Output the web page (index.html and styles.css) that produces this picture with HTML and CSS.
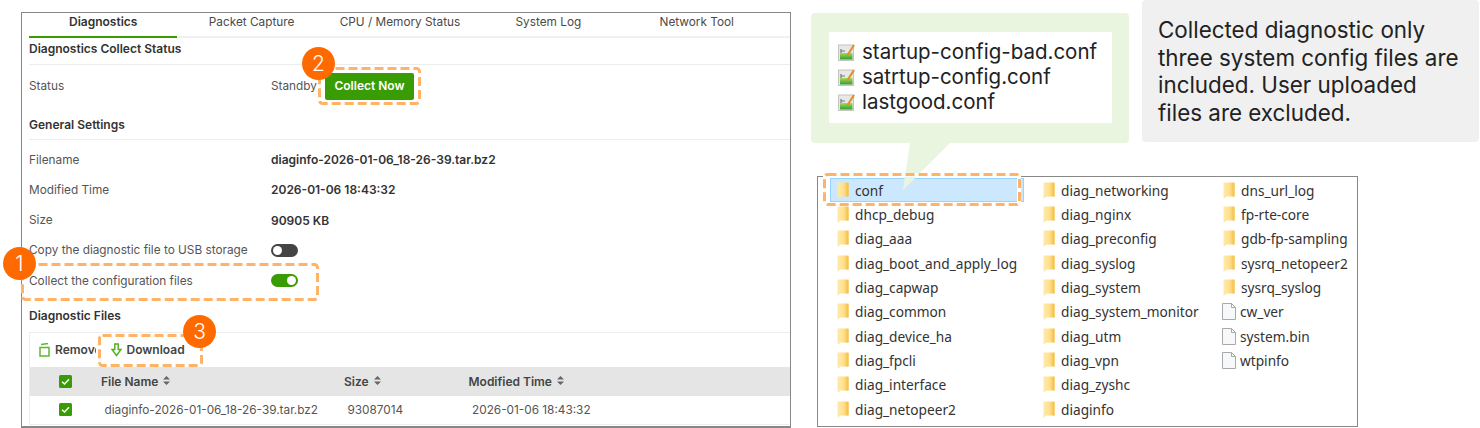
FILE: index.html
```html
<!DOCTYPE html>
<html lang="en">
<head>
<meta charset="utf-8">
<title>Diagnostics</title>
<link rel="stylesheet" href="styles.css">
</head>
<body>
<svg class="defs" aria-hidden="true">
  <defs>
    <linearGradient id="fg" x1="0" x2="1" y1="0" y2="0"><stop offset="0" stop-color="#ffe9ae"/><stop offset=".55" stop-color="#ffe08c"/><stop offset="1" stop-color="#f3c04e"/></linearGradient>
    <linearGradient id="cg" x1="0" x2="0" y1="0" y2="1"><stop offset="0" stop-color="#a5dc5a"/><stop offset="1" stop-color="#2f9e33"/></linearGradient>
    <symbol id="folder" viewBox="0 0 12 17"><path d="M0.5 0.5H11.5V14.5H3.5L1.2 16.5H0.5Z" fill="url(#fg)"/><path d="M9.5 1H11.5V14.5H9.5Z" fill="#f5c655"/></symbol>
    <symbol id="file" viewBox="0 0 14 17"><path d="M0.5 0.5H9.5L13.5 4.5V16.5H0.5Z" fill="#f7f8f9" stroke="#a9a9a9"/><path d="M9.5 0.5V4.5H13.5" fill="none" stroke="#a9a9a9"/></symbol>
    <symbol id="conf" viewBox="0 0 17 17"><rect x="0.5" y="1" width="15" height="15.5" fill="#e8e8e8" stroke="#c4c4c4"/><rect x="2" y="9" width="12.500" height="6.500" fill="url(#cg)"/><path d="M3 5v4M3 7h4" stroke="#777" stroke-width="1.200" fill="none"/><path d="M16 1L9 12" stroke="#e0912a" stroke-width="2.200"/></symbol>
    <symbol id="check" viewBox="0 0 13 13"><rect width="13" height="13" rx="1.500" fill="#3a9c05"/><path d="M3 6.800L5.500 9L10 4.300" fill="none" stroke="#fff" stroke-width="1.500"/></symbol>
    <symbol id="sort" viewBox="0 0 7 9"><path d="M3.500 0L7 3.500H0Z M0 5.500H7L3.500 9Z" fill="#666"/></symbol>
  </defs>
</svg>
<div class="page">
  <section class="panel">
    <nav class="tabs">
      <span class="tab tab-active">Diagnostics</span>
      <span class="tab">Packet Capture</span>
      <span class="tab">CPU / Memory Status</span>
      <span class="tab">System Log</span>
      <span class="tab">Network Tool</span>
    </nav>
    <div class="body">
      <h2 class="head head-first">Diagnostics Collect Status</h2>
      <div class="row row-status"><span class="label">Status</span><span class="value-plain">Standby</span><button class="collect">Collect Now</button></div>
      <h2 class="head head-general">General Settings</h2>
      <div class="rows">
        <div class="row"><span class="label">Filename</span><span class="value">diaginfo-2026-01-06_18-26-39.tar.bz2</span></div>
        <div class="row"><span class="label">Modified Time</span><span class="value">2026-01-06 18:43:32</span></div>
        <div class="row"><span class="label">Size</span><span class="value">90905 KB</span></div>
        <div class="row"><span class="label">Copy the diagnostic file to USB storage</span><span class="toggle"></span></div>
        <div class="row"><span class="label">Collect the configuration files</span><span class="toggle toggle-on"></span></div>
      </div>
      <h2 class="head head-files">Diagnostic Files</h2>
      <div class="files">
        <div class="toolbar">
          <span class="tool tool-remove"><svg class="tool-icon" viewBox="0 0 11 14"><path d="M1 4.500H10V13H1Z M2 1.500L9 0.500" fill="none" stroke="#5cb82e" stroke-width="1.500"/></svg>Remove</span>
          <span class="tool tool-download"><svg class="tool-icon" viewBox="0 0 11 14"><path d="M3.800 1H7.200V6.500H10L5.500 12.500L1 6.500H3.800Z" fill="none" stroke="#4fae1e" stroke-width="1.400"/></svg>Download</span>
        </div>
        <div class="grid grid-head">
          <span class="cell-check"><svg class="check"><use href="#check"/></svg></span>
          <span>File Name<svg class="sort"><use href="#sort"/></svg></span>
          <span>Size<svg class="sort"><use href="#sort"/></svg></span>
          <span>Modified Time<svg class="sort"><use href="#sort"/></svg></span>
        </div>
        <div class="grid grid-row">
          <span class="cell-check"><svg class="check"><use href="#check"/></svg></span>
          <span class="cell">diaginfo-2026-01-06_18-26-39.tar.bz2</span>
          <span class="cell">93087014</span>
          <span class="cell">2026-01-06 18:43:32</span>
        </div>
      </div>
    </div>
  </section>

  <div class="side">
    <div class="notes">
      <div class="bubble">
        <div class="conf-list">
          <div class="conf-item"><svg class="conf-icon"><use href="#conf"/></svg>startup-config-bad.conf</div>
          <div class="conf-item"><svg class="conf-icon"><use href="#conf"/></svg>satrtup-config.conf</div>
          <div class="conf-item"><svg class="conf-icon"><use href="#conf"/></svg>lastgood.conf</div>
        </div>
      </div>
      <p class="note">Collected diagnostic only three system config files are included. User uploaded files are excluded.</p>
    </div>
    <div class="explorer">
      <div class="entry entry-selected"><svg class="ficon"><use href="#folder"/></svg>conf</div>
      <div class="entry"><svg class="ficon"><use href="#folder"/></svg>dhcp_debug</div>
      <div class="entry"><svg class="ficon"><use href="#folder"/></svg>diag_aaa</div>
      <div class="entry"><svg class="ficon"><use href="#folder"/></svg>diag_boot_and_apply_log</div>
      <div class="entry"><svg class="ficon"><use href="#folder"/></svg>diag_capwap</div>
      <div class="entry"><svg class="ficon"><use href="#folder"/></svg>diag_common</div>
      <div class="entry"><svg class="ficon"><use href="#folder"/></svg>diag_device_ha</div>
      <div class="entry"><svg class="ficon"><use href="#folder"/></svg>diag_fpcli</div>
      <div class="entry"><svg class="ficon"><use href="#folder"/></svg>diag_interface</div>
      <div class="entry"><svg class="ficon"><use href="#folder"/></svg>diag_netopeer2</div>
      <div class="entry"><svg class="ficon"><use href="#folder"/></svg>diag_networking</div>
      <div class="entry"><svg class="ficon"><use href="#folder"/></svg>diag_nginx</div>
      <div class="entry"><svg class="ficon"><use href="#folder"/></svg>diag_preconfig</div>
      <div class="entry"><svg class="ficon"><use href="#folder"/></svg>diag_syslog</div>
      <div class="entry"><svg class="ficon"><use href="#folder"/></svg>diag_system</div>
      <div class="entry"><svg class="ficon"><use href="#folder"/></svg>diag_system_monitor</div>
      <div class="entry"><svg class="ficon"><use href="#folder"/></svg>diag_utm</div>
      <div class="entry"><svg class="ficon"><use href="#folder"/></svg>diag_vpn</div>
      <div class="entry"><svg class="ficon"><use href="#folder"/></svg>diag_zyshc</div>
      <div class="entry"><svg class="ficon"><use href="#folder"/></svg>diaginfo</div>
      <div class="entry"><svg class="ficon"><use href="#folder"/></svg>dns_url_log</div>
      <div class="entry"><svg class="ficon"><use href="#folder"/></svg>fp-rte-core</div>
      <div class="entry"><svg class="ficon"><use href="#folder"/></svg>gdb-fp-sampling</div>
      <div class="entry"><svg class="ficon"><use href="#folder"/></svg>sysrq_netopeer2</div>
      <div class="entry"><svg class="ficon"><use href="#folder"/></svg>sysrq_syslog</div>
      <div class="entry"><svg class="ficon ficon-file"><use href="#file"/></svg>cw_ver</div>
      <div class="entry"><svg class="ficon ficon-file"><use href="#file"/></svg>system.bin</div>
      <div class="entry"><svg class="ficon ficon-file"><use href="#file"/></svg>wtpinfo</div>
    </div>
  </div>

  <svg class="tail" viewBox="0 0 48 48"><path d="M7 0H47L0 47Z"/></svg>
  <svg class="mark mark-one" viewBox="0 0 298 38"><rect class="mark-line" x="1.500" y="1.500" width="295" height="35" rx="3"/></svg>
  <svg class="mark mark-two" viewBox="0 0 103 38"><rect class="mark-line" x="1.500" y="1.500" width="100" height="35" rx="3"/></svg>
  <svg class="mark mark-three" viewBox="0 0 105 33"><rect class="mark-halo" x="1.500" y="1.500" width="102" height="30" rx="3"/><rect class="mark-line" x="1.500" y="1.500" width="102" height="30" rx="3"/></svg>
  <svg class="mark mark-conf" viewBox="0 0 198 33"><rect class="mark-halo" x="1.500" y="1.500" width="195" height="30" rx="3"/><rect class="mark-line" x="1.500" y="1.500" width="195" height="30" rx="3"/></svg>
  <span class="badge badge-one">1</span>
  <span class="badge badge-two">2</span>
  <span class="badge badge-three">3</span>
</div>
</body>
</html>
```

FILE: styles.css
```css
* { box-sizing: border-box; }
html, body { margin: 0; padding: 0; background: #fff; }
body { font-family: Inter, "Liberation Sans", sans-serif; color: #333; }
.defs { position: absolute; width: 0; height: 0; }
.page { position: relative; display: flex; width: 1480px; height: 428px; overflow: hidden; }

.panel { flex: none; width: 770px; height: 416px; margin: 12px 0 0 21px; border: 1px solid #888; border-bottom-width: 2px; overflow: hidden; }
.tabs { display: flex; height: 25px; margin-left: 7px; border-bottom: 2px solid #f0f0f0; font-size: 11.800px; }
.tab { flex: none; width: 148.400px; height: 25px; line-height: 18px; text-align: center; color: #4a4a4a; }
.tab-active { border-bottom: 2px solid #3a9c05; font-size: 12px; font-weight: 600; color: #333; }
.body { padding-left: 7px; font-size: 11.800px; }
.head { margin: 0; font-size: 12px; font-weight: 600; color: #333; }
.head-first { height: 27px; padding-top: 3px; line-height: 15px; border-bottom: 1px solid #ededed; }
.head-general { height: 33px; line-height: 35px; border-bottom: 1px solid #ededed; }
.rows { padding-top: 4.500px; }
.row { display: flex; align-items: center; height: 30.250px; color: #555; }
.row-status { height: 42px; }
.label { flex: none; width: 242px; }
.value { font-size: 12px; font-weight: 600; color: #333; }
.value-plain { width: 54px; flex: none; }
.collect { width: 89px; height: 27px; padding: 0 0 2px; border: 0; border-radius: 2px; background: #3a9c05; color: #fff; font: 600 12px Inter, sans-serif; }
.toggle { position: relative; width: 27px; height: 13px; border-radius: 7px; background: #444; }
.toggle::after { content: ""; position: absolute; top: 2px; left: 2px; width: 9px; height: 9px; border-radius: 50%; background: #fff; }
.toggle-on { background: #3a9c05; }
.toggle-on::after { left: 16px; }
.head-files { height: 36px; padding-top: 12px; line-height: 15px; }
.files { height: 93px; border: 1px solid #eee; border-right: 0; }
.toolbar { display: flex; align-items: center; height: 34px; padding: 0 0 0 9px; font-size: 12px; font-weight: 600; color: #444; }
.tool { display: flex; align-items: center; flex: none; white-space: nowrap; }
.tool-remove { width: 57px; overflow: hidden; }
.tool-download { margin-left: 14.500px; }
.tool-icon { flex: none; width: 11px; height: 14px; margin-right: 5px; }
.grid { display: grid; grid-template-columns: 71px 243px 124.500px 1fr; align-items: center; }
.grid-head { height: 29px; background: #e5e5e5; font-size: 12px; font-weight: 600; color: #444; }
.grid-head span:not(.cell-check) { padding-top: 1px; }
.grid-row { height: 28px; color: #555; }
.cell { padding-left: 3.500px; }
.cell-check { display: flex; justify-content: center; }
.check { width: 13px; height: 13px; }
.sort { width: 7px; height: 9px; margin: 0 0 4px 5px; vertical-align: middle; }

.side { flex: none; width: 669px; margin-left: 20px; }
.notes { display: flex; height: 143px; }
.bubble { flex: none; width: 318px; height: 130px; margin-top: 13px; padding: 19px 17px 0 18px; border-radius: 4px; background: #e9f5de; }
.conf-list { height: 91px; padding: 6.500px 0 0 9px; background: #fff; }
.conf-item { display: flex; align-items: center; height: 25px; font-size: 20.500px; color: #222; }
.conf-icon { flex: none; width: 17px; height: 17px; margin: 2px 7px 0 0; }
.note { flex: none; width: 337px; height: 142px; margin: 0 0 0 13px; padding: 16px 16px 0; border-radius: 4px; background: #f0f0f0; font-size: 22.400px; line-height: 27.500px; color: #222; }
.explorer { display: grid; grid-auto-flow: column; grid-template-rows: repeat(10, 24.350px); grid-template-columns: 206px 180px 1fr; width: 541px; height: 251px; margin: 33px 0 0 6px; padding: 1px 0 0 12px; border: 1px solid #888; font-family: "Noto Sans", sans-serif; font-size: 13.700px; color: #333; }
.entry { display: flex; align-items: center; white-space: nowrap; }
.entry-selected { margin-right: 12px; background: #cce8ff; box-shadow: inset 0 0 0 1px #99d1ff; }
.ficon { flex: none; width: 12px; height: 17px; margin: 0 6px 0 7px; }
.ficon-file { width: 14px; margin: 0 4px 0 6px; }

.tail { position: absolute; left: 903px; top: 143px; width: 48px; height: 48px; }
.tail path { fill: #e9f5de; }
.mark { position: absolute; }
.mark-line { fill: none; stroke: #ffb366; stroke-width: 3; stroke-dasharray: 9 4; }
.mark-halo { fill: none; stroke: #fff; stroke-width: 5; }
.mark-one { left: 21px; top: 263px; width: 298px; height: 38px; }
.mark-two { left: 318px; top: 67px; width: 103px; height: 38px; }
.mark-three { left: 98px; top: 334px; width: 105px; height: 33px; }
.mark-conf { left: 823px; top: 173px; width: 198px; height: 33px; }
.badge { position: absolute; display: flex; align-items: center; justify-content: center; width: 33px; height: 33px; border-radius: 50%; background: #ff6a00; color: #fff; font-size: 21px; font-weight: 300; }
.badge-one { left: 3px; top: 247px; }
.badge-two { left: 302px; top: 47px; }
.badge-three { left: 183px; top: 315px; }
```
